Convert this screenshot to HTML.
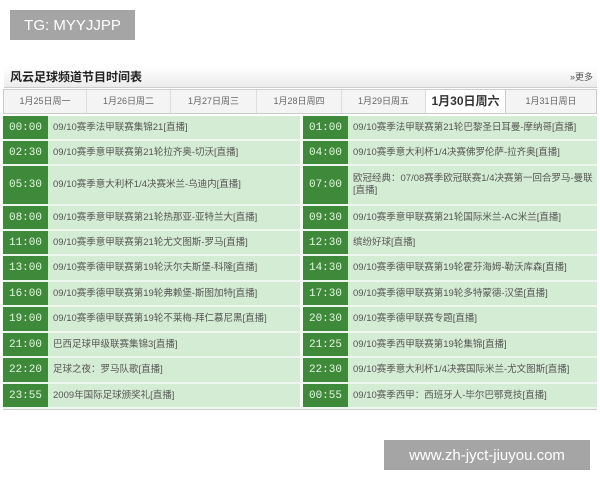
<!DOCTYPE html>
<html><head><meta charset="utf-8"><style>
*{margin:0;padding:0;box-sizing:border-box}
body{width:600px;height:480px;background:#fff;position:relative;overflow:hidden;font-family:"Liberation Sans","Noto Sans CJK SC",sans-serif}
.lbl{position:absolute;background:#a5a5a5;color:#fff;font-size:15px;display:flex;align-items:center;justify-content:center}
.title{position:absolute;left:4px;top:66px;width:593px;height:22px;background:linear-gradient(#fff,#ececec);border-bottom:1px solid #ccc;font-size:12px;font-weight:bold;color:#222;padding-left:6px;line-height:22px}
.more{position:absolute;right:4px;top:0;font-size:9px;font-weight:normal;color:#555}
.tabs{position:absolute;left:3px;top:89px;width:594px;height:25px;background:#f4f4f4;border:1px solid #ccc}
.tab{position:absolute;top:0;height:23px;line-height:23px;text-align:center;font-size:9px;color:#666;border-right:1px solid #ddd;white-space:nowrap}
.tab.a{background:#fff;font-size:12px;font-weight:bold;color:#333;border-right:1px solid #ccc}
.row{position:absolute;left:3px;width:594px;border-bottom:2px solid #eef7ee}
.t{position:absolute;top:0;bottom:0;width:45px;background:#3f8a3a;color:#e8f5e6;font-size:11px;font-family:"Liberation Mono",monospace;display:flex;align-items:center;justify-content:center}
.c{position:absolute;top:0;bottom:0;background:#d4ecd3;color:#555;font-size:9.5px;display:flex;align-items:center;padding-left:5px;line-height:12px}
</style></head><body>
<div class="lbl" style="left:10px;top:10px;width:125px;height:30px">TG: MYYJJPP</div>
<div class="title">风云足球频道节目时间表<span class="more">»更多</span></div>
<div class="tabs">
<div class="tab" style="left:0;width:83px">1月25日周一</div>
<div class="tab" style="left:83px;width:84px">1月26日周二</div>
<div class="tab" style="left:167px;width:86px">1月27日周三</div>
<div class="tab" style="left:253px;width:85px">1月28日周四</div>
<div class="tab" style="left:338px;width:84px">1月29日周五</div>
<div class="tab a" style="left:422px;width:80px">1月30日周六</div>
<div class="tab" style="left:502px;width:90px;border:none">1月31日周日</div>
</div>
<div class="row" style="top:116px;height:25px"><div class="t" style="left:0">00:00</div><div class="c" style="left:45px;width:252px">09/10赛季法甲联赛集锦21[直播]</div><div class="t" style="left:300px">01:00</div><div class="c" style="left:345px;width:249px">09/10赛季法甲联赛第21轮巴黎圣日耳曼-摩纳哥[直播]</div></div>
<div class="row" style="top:141px;height:25px"><div class="t" style="left:0">02:30</div><div class="c" style="left:45px;width:252px">09/10赛季意甲联赛第21轮拉齐奥-切沃[直播]</div><div class="t" style="left:300px">04:00</div><div class="c" style="left:345px;width:249px">09/10赛季意大利杯1/4决赛佛罗伦萨-拉齐奥[直播]</div></div>
<div class="row" style="top:166px;height:40px"><div class="t" style="left:0">05:30</div><div class="c" style="left:45px;width:252px">09/10赛季意大利杯1/4决赛米兰-乌迪内[直播]</div><div class="t" style="left:300px">07:00</div><div class="c" style="left:345px;width:249px">欧冠经典：07/08赛季欧冠联赛1/4决赛第一回合罗马-曼联[直播]</div></div>
<div class="row" style="top:206px;height:25px"><div class="t" style="left:0">08:00</div><div class="c" style="left:45px;width:252px">09/10赛季意甲联赛第21轮热那亚-亚特兰大[直播]</div><div class="t" style="left:300px">09:30</div><div class="c" style="left:345px;width:249px">09/10赛季意甲联赛第21轮国际米兰-AC米兰[直播]</div></div>
<div class="row" style="top:231px;height:25px"><div class="t" style="left:0">11:00</div><div class="c" style="left:45px;width:252px">09/10赛季意甲联赛第21轮尤文图斯-罗马[直播]</div><div class="t" style="left:300px">12:30</div><div class="c" style="left:345px;width:249px">缤纷好球[直播]</div></div>
<div class="row" style="top:256px;height:26px"><div class="t" style="left:0">13:00</div><div class="c" style="left:45px;width:252px">09/10赛季德甲联赛第19轮沃尔夫斯堡-科隆[直播]</div><div class="t" style="left:300px">14:30</div><div class="c" style="left:345px;width:249px">09/10赛季德甲联赛第19轮霍芬海姆-勒沃库森[直播]</div></div>
<div class="row" style="top:282px;height:25px"><div class="t" style="left:0">16:00</div><div class="c" style="left:45px;width:252px">09/10赛季德甲联赛第19轮弗赖堡-斯图加特[直播]</div><div class="t" style="left:300px">17:30</div><div class="c" style="left:345px;width:249px">09/10赛季德甲联赛第19轮多特蒙德-汉堡[直播]</div></div>
<div class="row" style="top:307px;height:26px"><div class="t" style="left:0">19:00</div><div class="c" style="left:45px;width:252px">09/10赛季德甲联赛第19轮不莱梅-拜仁慕尼黑[直播]</div><div class="t" style="left:300px">20:30</div><div class="c" style="left:345px;width:249px">09/10赛季德甲联赛专题[直播]</div></div>
<div class="row" style="top:333px;height:25px"><div class="t" style="left:0">21:00</div><div class="c" style="left:45px;width:252px">巴西足球甲级联赛集锦3[直播]</div><div class="t" style="left:300px">21:25</div><div class="c" style="left:345px;width:249px">09/10赛季西甲联赛第19轮集锦[直播]</div></div>
<div class="row" style="top:358px;height:26px"><div class="t" style="left:0">22:20</div><div class="c" style="left:45px;width:252px">足球之夜：罗马队歌[直播]</div><div class="t" style="left:300px">22:30</div><div class="c" style="left:345px;width:249px">09/10赛季意大利杯1/4决赛国际米兰-尤文图斯[直播]</div></div>
<div class="row" style="top:384px;height:25px"><div class="t" style="left:0">23:55</div><div class="c" style="left:45px;width:252px">2009年国际足球颁奖礼[直播]</div><div class="t" style="left:300px">00:55</div><div class="c" style="left:345px;width:249px">09/10赛季西甲：西班牙人-毕尔巴鄂竞技[直播]</div></div>
<div style="position:absolute;left:3px;top:409px;width:594px;height:1px;background:#ccc"></div>
<div class="lbl" style="left:384px;top:440px;width:206px;height:30px">www.zh-jyct-jiuyou.com</div>
</body></html>
